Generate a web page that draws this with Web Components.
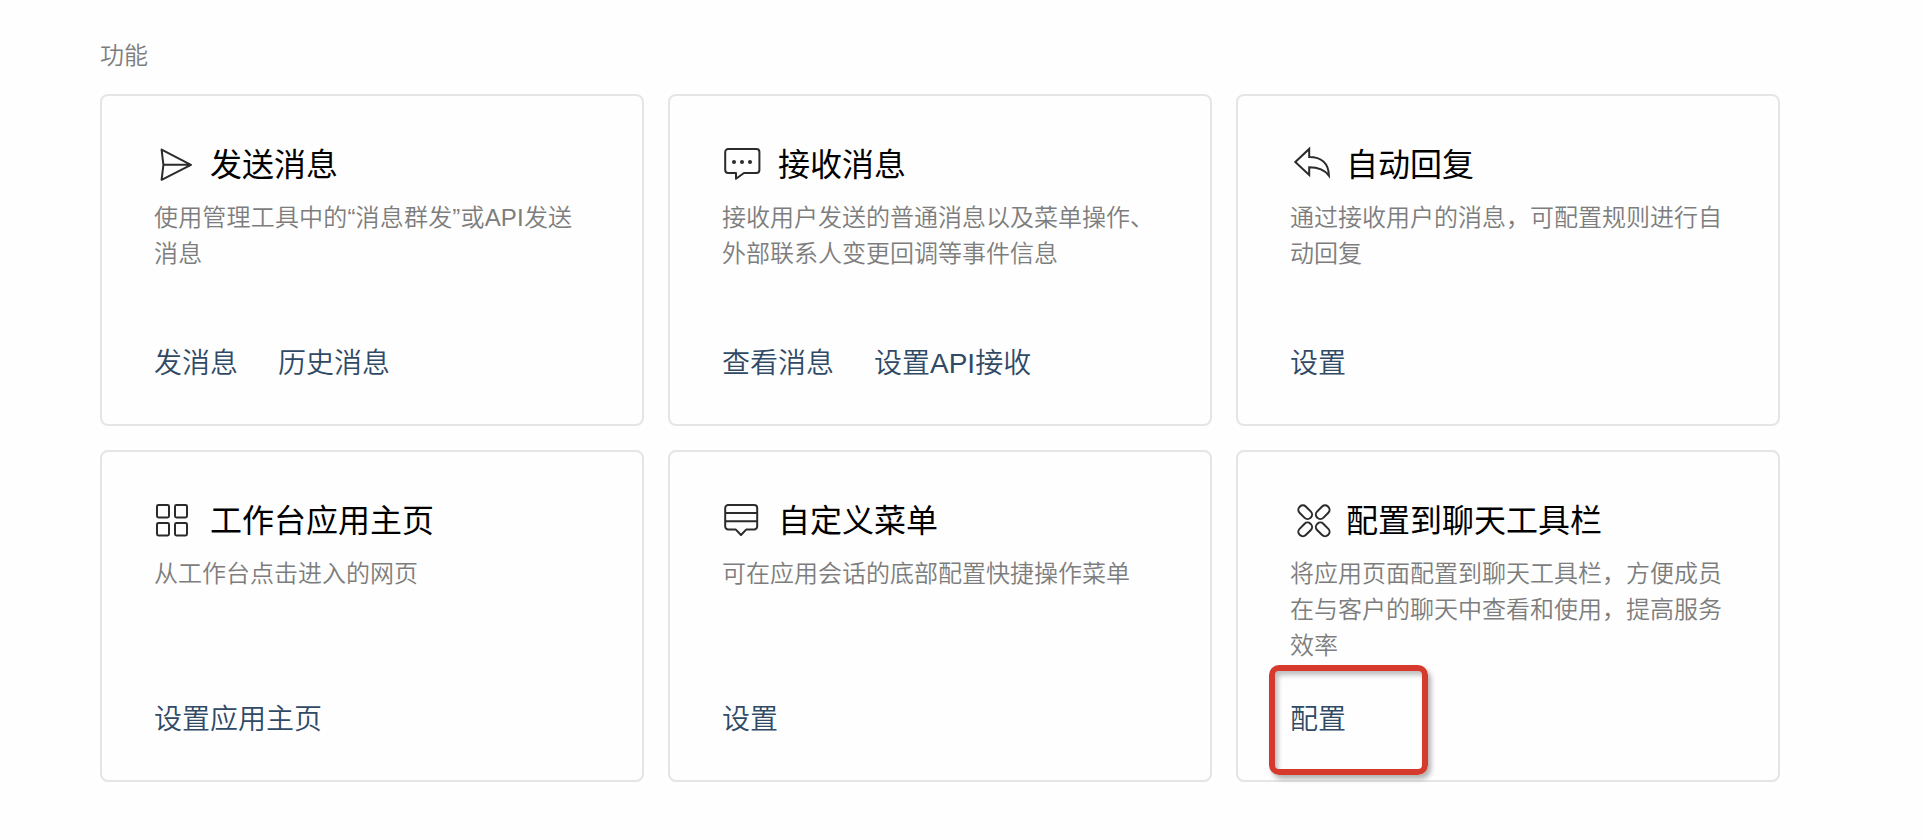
<!DOCTYPE html>
<html lang="zh-CN">
<head>
<meta charset="utf-8">
<title>功能</title>
<style>
  body {
    margin: 0;
    background: #fefefe;
    font-family: "Liberation Sans", "Noto Sans CJK SC", sans-serif;
    font-weight: 350;
  }
  feature-card[icon="send"] {
    --text-spacing: 0.18px;
  }
</style>
</head>
<body>

<feature-section heading="功能">
  <feature-card icon="send" heading="发送消息">
    使用管理工具中的“消息群发”或API发送消息
    <card-link slot="links">发消息</card-link>
    <card-link slot="links">历史消息</card-link>
  </feature-card>
  <feature-card icon="receive" heading="接收消息">
    接收用户发送的普通消息以及菜单操作、外部联系人变更回调等事件信息
    <card-link slot="links">查看消息</card-link>
    <card-link slot="links">设置API接收</card-link>
  </feature-card>
  <feature-card icon="reply" heading="自动回复">
    通过接收用户的消息，可配置规则进行自动回复
    <card-link slot="links">设置</card-link>
  </feature-card>
  <feature-card icon="grid" heading="工作台应用主页">
    从工作台点击进入的网页
    <card-link slot="links">设置应用主页</card-link>
  </feature-card>
  <feature-card icon="menu" heading="自定义菜单">
    可在应用会话的底部配置快捷操作菜单
    <card-link slot="links">设置</card-link>
  </feature-card>
  <feature-card icon="toolbar" heading="配置到聊天工具栏">
    将应用页面配置到聊天工具栏，方便成员在与客户的聊天中查看和使用，提高服务效率
    <card-link slot="links" marked>配置</card-link>
  </feature-card>
</feature-section>

<script>
const ICONS = {
  send: '<path d="M7.6 5.6 37 20.8 7.6 35.8 9.4 20.8ZM9.4 20.8H37"/>',
  receive: `
    <path d="M6.2 5H34.4a3 3 0 0 1 3 3V26a3 3 0 0 1-3 3H22L14 34.8V29H6.2a3 3 0 0 1-3-3V8a3 3 0 0 1 3-3Z"/>
    <g fill="currentColor" stroke="none">
      <circle cx="12" cy="18" r="2"/><circle cx="20" cy="18" r="2"/><circle cx="28" cy="18" r="2"/>
    </g>`,
  reply: '<path stroke-linejoin="miter" d="M5.3 18 19.2 4.9V13C31 13 38.6 19 38.9 31.6C34.5 25.4 29 23.2 19.2 23.2V31Z"/>',
  grid: `
    <rect x="3" y="5" width="12" height="12.4" rx="1.4"/><rect x="21" y="5" width="12" height="12.4" rx="1.4"/>
    <rect x="3" y="23" width="12" height="12.4" rx="1.4"/><rect x="21" y="23" width="12" height="12.4" rx="1.4"/>`,
  menu: `
    <path d="M6.2 5H32.2a3 3 0 0 1 3 3V26.4a3 3 0 0 1-3 3H24.4L19 35 13.6 29.4H6.2a3 3 0 0 1-3-3V8a3 3 0 0 1 3-3Z"/>
    <path d="M3.2 13.1H35.2M3.2 21.2H35.2"/>`,
  toolbar: `
    <rect x="7.5" y="7.8" width="15.4" height="8.8" rx="4.1" transform="rotate(45 15.2 12.2)"/>
    <rect x="25" y="7.8" width="15.4" height="8.8" rx="4.1" transform="rotate(-45 32.7 12.2)"/>
    <rect x="7.5" y="25" width="15.4" height="8.8" rx="4.1" transform="rotate(-45 15.2 29.4)"/>
    <rect x="25" y="25" width="15.4" height="8.8" rx="4.1" transform="rotate(45 32.7 29.4)"/>`
};

class FeatureIcon extends HTMLElement {
  constructor() {
    super();
    this.attachShadow({mode: 'open'});
  }

  connectedCallback() {
    this.shadowRoot.innerHTML = `
      <style>
        :host {
          display: block;
          flex: none;
          width: 40px;
          height: 40px;
          color: #2b2b2b;
        }
        svg {
          display: block;
          overflow: visible;
        }
      </style>
      <svg width="40" height="40" viewBox="0 0 40 40" fill="none" stroke="currentColor"
        stroke-width="2" stroke-linejoin="round">${ICONS[this.getAttribute('name')]}</svg>
    `;
  }
}

class CardLink extends HTMLElement {
  constructor() {
    super();
    this.attachShadow({mode: 'open'}).innerHTML = `
      <style>
        :host {
          display: block;
          position: relative;
          font-size: 28px;
          line-height: 40px;
          color: #304a66;
          white-space: nowrap;
          cursor: pointer;
        }
        /* red frame drawn around the link, over the card */
        :host([marked])::before {
          content: "";
          position: absolute;
          left: -21px;
          top: -35px;
          width: 147px;
          height: 98px;
          border: 6px solid #d53a2c;
          border-radius: 10px;
          box-shadow: 3px 4px 5px rgba(0, 0, 0, 0.3), inset 3px 4px 5px rgba(0, 0, 0, 0.25);
        }
      </style>
      <slot></slot>
    `;
  }
}

class FeatureCard extends HTMLElement {
  constructor() {
    super();
    this.attachShadow({mode: 'open'});
  }

  connectedCallback() {
    this.shadowRoot.innerHTML = `
      <style>
        :host {
          display: flex;
          flex-direction: column;
          box-sizing: border-box;
          height: 332px;
          padding: 48px 52px 40px;
          border: 2px solid #e5e5e5;
          border-radius: 8px;
          background: #fefefe;
        }
        header {
          display: flex;
          align-items: flex-start;
          gap: 16px;
          height: 40px;
        }
        h2 {
          margin: 0;
          font-size: 32px;
          font-weight: 400;
          line-height: 42px;
          color: #000;
          white-space: nowrap;
        }
        p {
          margin: 16px 0 0;
          font-size: 24px;
          line-height: 36px;
          letter-spacing: var(--text-spacing, normal);
          color: #7d7d7d;
        }
        nav {
          display: flex;
          gap: 40px;
          margin-top: auto;
        }
      </style>
      <header>
        <feature-icon name="${this.getAttribute('icon')}"></feature-icon>
        <h2>${this.getAttribute('heading')}</h2>
      </header>
      <p><slot></slot></p>
      <nav><slot name="links"></slot></nav>
    `;
  }
}

class FeatureSection extends HTMLElement {
  constructor() {
    super();
    this.attachShadow({mode: 'open'});
  }

  connectedCallback() {
    this.shadowRoot.innerHTML = `
      <style>
        :host {
          display: block;
          padding: 38px 144px 58px 100px;
        }
        h1 {
          margin: 0 0 20px;
          font-size: 24px;
          font-weight: inherit;
          line-height: 36px;
          color: #7d7d7d;
        }
        .cards {
          display: grid;
          grid-template-columns: repeat(3, 1fr);
          gap: 24px;
        }
      </style>
      <h1>${this.getAttribute('heading')}</h1>
      <div class="cards"><slot></slot></div>
    `;
  }
}

customElements.define('feature-icon', FeatureIcon);
customElements.define('card-link', CardLink);
customElements.define('feature-card', FeatureCard);
customElements.define('feature-section', FeatureSection);
</script>
</body>
</html>
